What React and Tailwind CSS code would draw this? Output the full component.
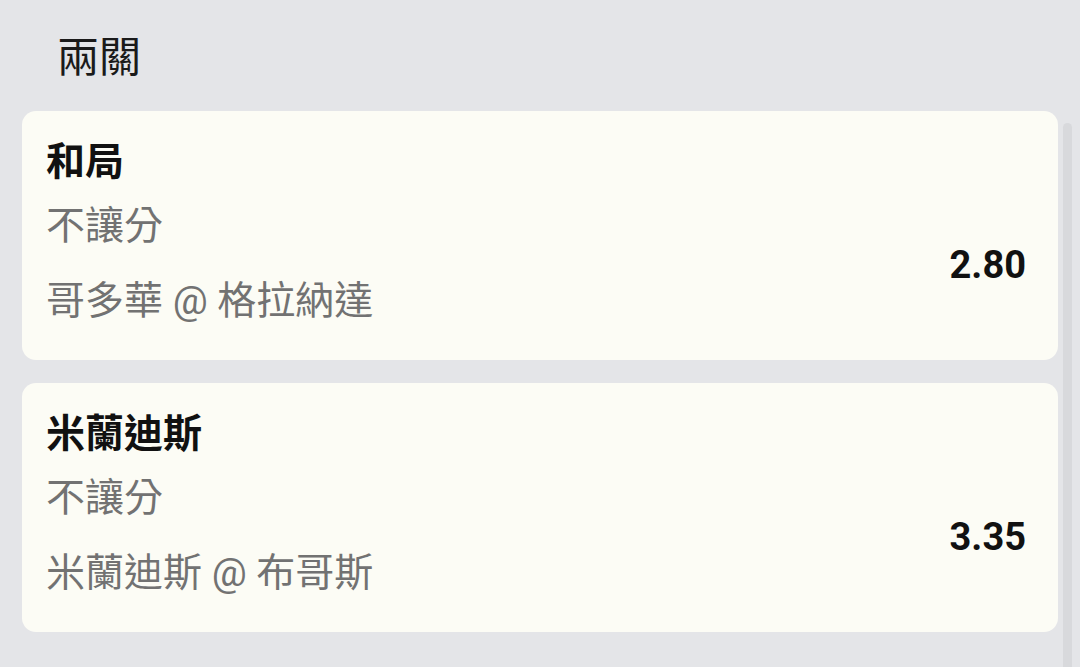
import React from 'react';

const bets = [
  { pick: '和局', market: '不讓分', match: '哥多華 @ 格拉納達', odds: '2.80' },
  { pick: '米蘭迪斯', market: '不讓分', match: '米蘭迪斯 @ 布哥斯', odds: '3.35' }
];

function BetCard({ pick, market, match, odds }) {
  return (
    <div className="rounded-[14px] bg-[#fcfcf5] pl-[24px] pr-[32px] pt-[26px] pb-[34px]">
      <div className="text-[39px] leading-[50px] font-bold text-[#111]">{pick}</div>
      <div className="mt-[14px] flex items-center justify-between">
        <div className="text-[39px] leading-[50px] text-[#727272]">
          <div>{market}</div>
          <div className="mt-[25px]">{match}</div>
        </div>
        <div className="mt-[4px] text-[38px] font-bold text-[#111]">{odds}</div>
      </div>
    </div>
  );
}

export default function App() {
  return (
    <div
      className="relative h-[667px] w-[1080px] overflow-hidden bg-[#e4e5e8]"
      style={{ fontFamily: "Roboto, 'Noto Sans CJK TC', sans-serif" }}
    >
      <h1 className="pl-[57px] pt-[30px] text-[42px] leading-[56px] font-normal text-[#1a1a1a]">兩關</h1>
      <div className="ml-[22px] mt-[25px] flex w-[1036px] flex-col gap-[23px]">
        {bets.map((b) => (
          <BetCard key={b.pick} {...b} />
        ))}
      </div>
      <div className="absolute left-[1063px] top-[123px] h-[560px] w-[9px] rounded-t-full bg-[#d8d9dc]" />
    </div>
  );
}
